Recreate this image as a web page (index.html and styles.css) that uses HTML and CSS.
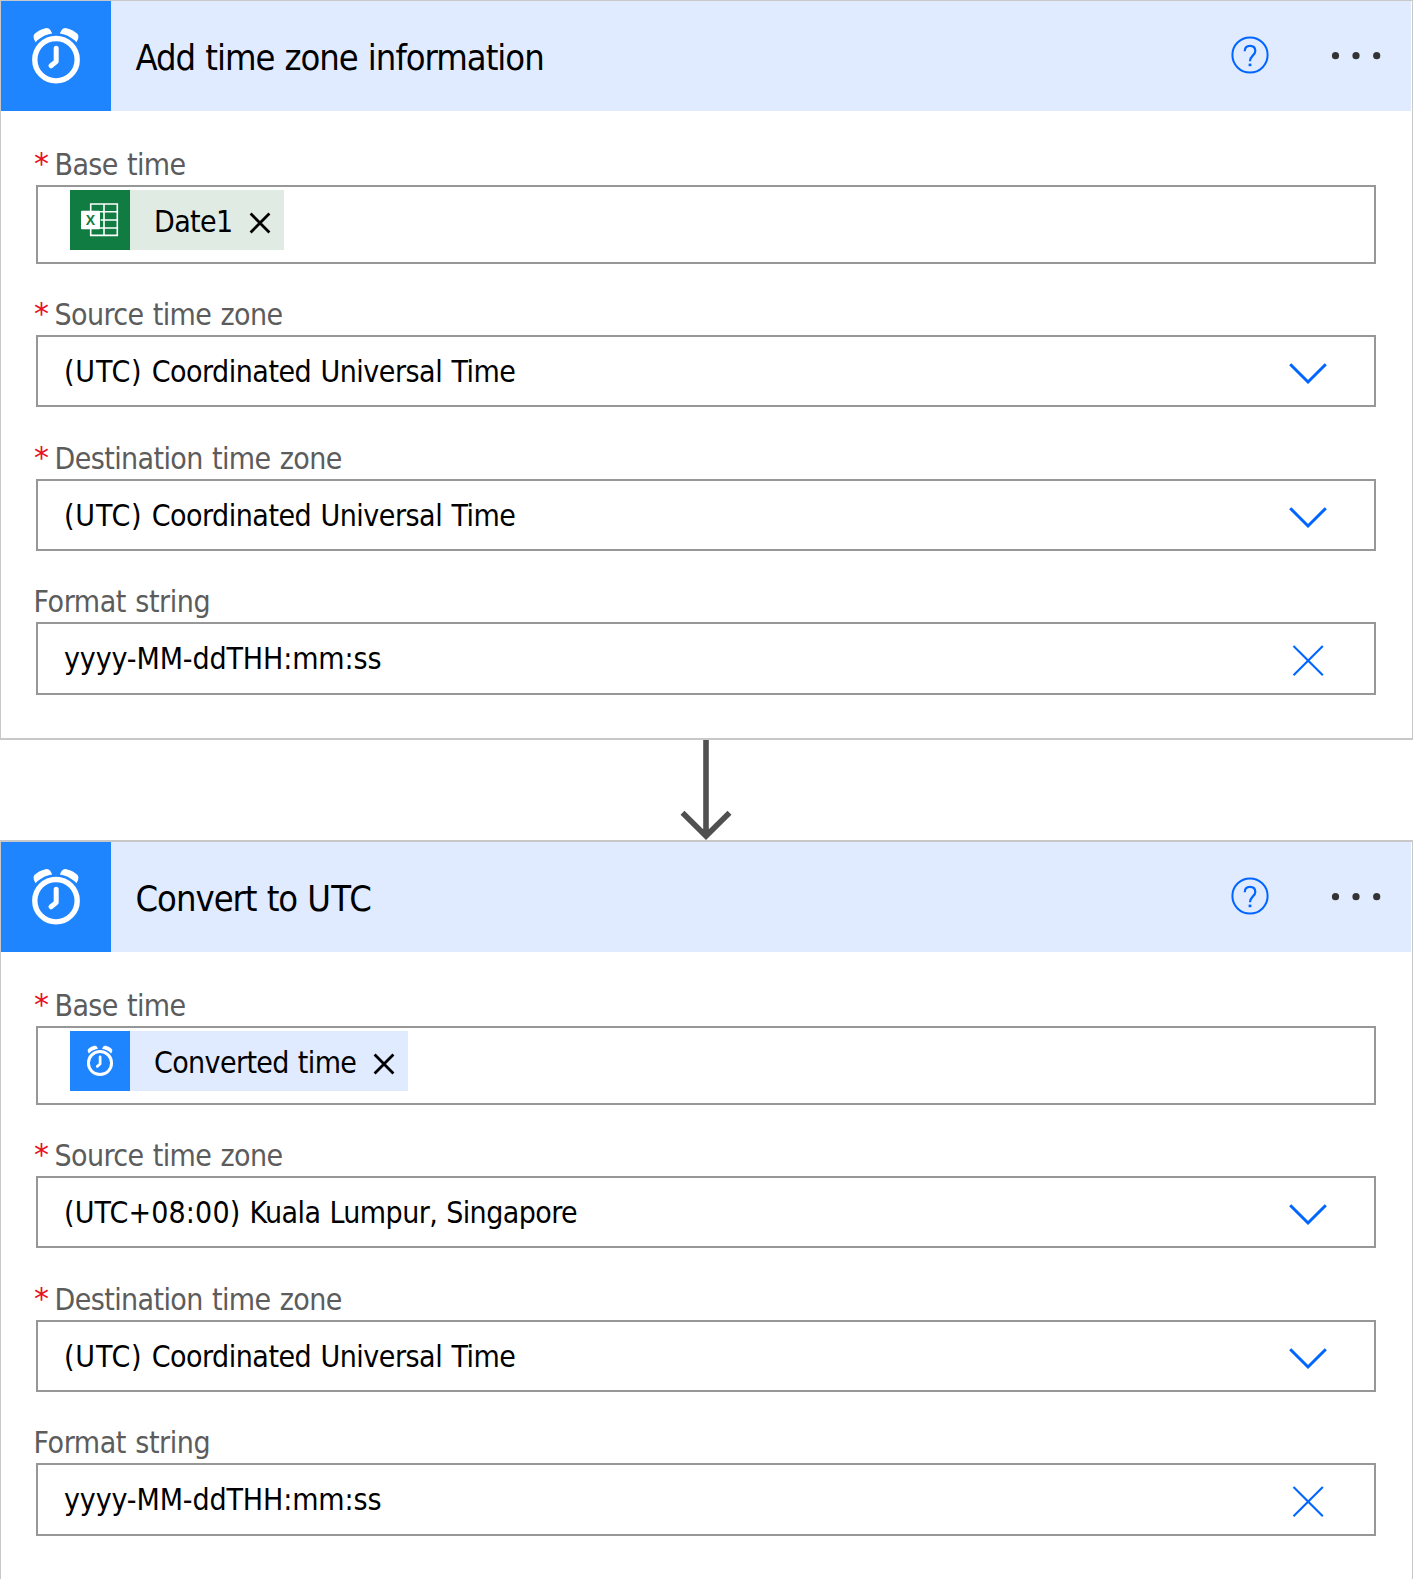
FILE: index.html
```html
<!DOCTYPE html>
<html lang="en">
<head>
<meta charset="utf-8">
<title>Flow designer</title>
<link rel="stylesheet" href="styles.css">
</head>
<body>
<svg class="defs" aria-hidden="true">
  <symbol id="clock" viewBox="0 0 110 110">
    <circle cx="55" cy="58.7" r="21.2" fill="none" stroke="#fff" stroke-width="5.4"/>
    <path d="M55.200 47.2V60.6L50 64.8" fill="none" stroke="#fff" stroke-width="5" stroke-linecap="round" stroke-linejoin="round"/>
    <path id="bell" d="M34.600 41.200C38.500 37.200 44 33.600 51.200 32.600L49.400 29Q47.500 26.600 44.500 27.200Q37.500 29 33.400 33Q31.600 35.400 32.900 38Z" fill="#fff"/>
    <use href="#bell" transform="translate(110 0) scale(-1 1)"/>
  </symbol>
  <symbol id="help" viewBox="0 0 40 40">
    <circle cx="20" cy="20" r="17.600" fill="none" stroke="#0066ff" stroke-width="2"/>
    <path d="M14.700 16.300C14.700 12.500 16.800 10.900 20 10.900C23.200 10.900 25.300 12.800 25.300 15.900C25.300 20.300 20 20.600 20 26.300" fill="none" stroke="#0066ff" stroke-width="2.200"/>
    <rect x="18.600" y="28.600" width="2.800" height="2.600" fill="#0066ff"/>
  </symbol>
  <symbol id="dots" viewBox="0 0 50 10">
    <g fill="#333"><circle cx="4.500" cy="4.700" r="3.600"/><circle cx="25" cy="4.700" r="3.600"/><circle cx="45.700" cy="4.700" r="3.600"/></g>
  </symbol>
  <symbol id="chevron" viewBox="0 0 40 40">
    <path d="M2.200 12.200L20 30L37.800 12.200" fill="none" stroke="#0066ff" stroke-width="3"/>
  </symbol>
  <symbol id="clear" viewBox="0 0 40 40">
    <path d="M5.500 6L34.800 35.300M34.800 6L5.500 35.300" fill="none" stroke="#0066ff" stroke-width="2.100"/>
  </symbol>
  <symbol id="remove" viewBox="0 0 22 22">
    <path d="M1.600 1.600L20.400 20.400M20.400 1.600L1.600 20.400" fill="none" stroke="#000" stroke-width="2.800"/>
  </symbol>
</svg>

<section class="card">
  <header class="head">
    <div class="tile"><svg><use href="#clock"/></svg></div>
    <h1 class="title">Add time zone information</h1>
    <svg class="help"><use href="#help"/></svg>
    <svg class="dots"><use href="#dots"/></svg>
  </header>
  <div class="fields">
    <div class="label"><span class="req">*</span><span class="name">Base time</span></div>
    <div class="box box-token">
      <div class="token token-excel">
        <svg class="token-icon" viewBox="0 0 60 60">
          <rect width="60" height="60" fill="#107c41"/>
          <path d="M20.700 14H47.300V45.400H20.700ZM34 14V45.400M20.700 21.800H47.300M20.700 30H47.300M20.700 38H47.300" fill="none" stroke="#fff" stroke-width="1.600"/>
          <rect x="28" y="22.600" width="2.600" height="14.600" fill="#107c41"/>
          <rect x="11" y="20.700" width="19" height="18.500" rx="1" fill="#fff"/>
          <text class="excel-x" x="20.500" y="35.300" text-anchor="middle">X</text>
        </svg>
        <span class="token-text">Date1</span>
        <svg class="remove"><use href="#remove"/></svg>
      </div>
    </div>
    <div class="label gap-s"><span class="req">*</span><span class="name">Source time zone</span></div>
    <div class="box"><span class="value"><span class="utc">(UTC)</span> Coordinated Universal Time</span><svg class="action"><use href="#chevron"/></svg></div>
    <div class="label gap-m"><span class="req">*</span><span class="name">Destination time zone</span></div>
    <div class="box"><span class="value"><span class="utc">(UTC)</span> Coordinated Universal Time</span><svg class="action"><use href="#chevron"/></svg></div>
    <div class="label gap-s"><span class="name plain">Format string</span></div>
    <div class="box box-tall"><span class="format">yyyy-MM-ddTHH:mm:ss</span><svg class="action"><use href="#clear"/></svg></div>
  </div>
</section>

<svg class="arrow" viewBox="0 0 60 100">
  <path d="M30 0V95M6.500 72.700L30 96L53.500 72.700" fill="none" stroke="#505050" stroke-width="5.600"/>
</svg>

<section class="card card-next">
  <header class="head">
    <div class="tile"><svg><use href="#clock"/></svg></div>
    <h1 class="title">Convert to <span class="title-utc">UTC</span></h1>
    <svg class="help"><use href="#help"/></svg>
    <svg class="dots"><use href="#dots"/></svg>
  </header>
  <div class="fields">
    <div class="label"><span class="req">*</span><span class="name">Base time</span></div>
    <div class="box box-token">
      <div class="token token-time">
        <div class="token-icon time-icon"><svg><use href="#clock"/></svg></div>
        <span class="token-text">Converted time</span>
        <svg class="remove"><use href="#remove"/></svg>
      </div>
    </div>
    <div class="label gap-s"><span class="req">*</span><span class="name">Source time zone</span></div>
    <div class="box"><span class="value place"><span class="offset">(UTC+08:00)</span> Kuala Lumpur, Singapore</span><svg class="action"><use href="#chevron"/></svg></div>
    <div class="label gap-m"><span class="req">*</span><span class="name">Destination time zone</span></div>
    <div class="box"><span class="value"><span class="utc">(UTC)</span> Coordinated Universal Time</span><svg class="action"><use href="#chevron"/></svg></div>
    <div class="label gap-s"><span class="name plain">Format string</span></div>
    <div class="box box-tall"><span class="format">yyyy-MM-ddTHH:mm:ss</span><svg class="action"><use href="#clear"/></svg></div>
  </div>
</section>
</body>
</html>
```
FILE: styles.css
```css
* { box-sizing: border-box; }
html, body { margin: 0; height: 1579px; overflow: hidden; background: #fff; }
body {
  font-family: Tahoma, "DejaVu Sans Condensed", "DejaVu Sans", sans-serif;
  font-stretch: condensed;
  font-size: 30px;
  color: #000;
  display: flex;
  flex-direction: column;
}
svg { display: block; flex: none; }
.defs { width: 0; height: 0; position: absolute; }
.card { flex: none; border: 1px solid #c8c8c8; border-bottom-width: 2px; background: #fff; }
.card-next { border-top-width: 2px; }
.head { display: flex; align-items: center; height: 110px; margin-right: 1px; background: #e1ebff; padding-right: 30px; }
.tile { width: 110px; height: 110px; background: #1f85ff; flex: none; }
.tile svg { width: 110px; height: 110px; }
.title { flex: 1; margin: 0; padding: 4px 0 0 24.500px; font-size: 36px; font-weight: 400; line-height: 44px; white-space: nowrap; letter-spacing: -1px; word-spacing: 0.8px; }
.title-utc { letter-spacing: 0.3px; }
.help { width: 40px; height: 40px; margin: 0 61px 2px 0; }
.dots { width: 50px; height: 10px; }
.fields { padding: 34px 36px 43px 35px; }
.label { display: flex; height: 40px; line-height: 40px; color: #5c5c5c; white-space: nowrap; margin-left: -2px; }
.name { letter-spacing: -0.6px; word-spacing: 1.2px; }
.plain { letter-spacing: -0.42px; margin-left: -0.500px; }
.req { color: #e81123; width: 20.500px; font-family: "DejaVu Sans", sans-serif; font-stretch: normal; line-height: 37px; }
.gap-s { margin-top: 31px; }
.gap-m { margin-top: 32px; }
.box { display: flex; align-items: center; justify-content: space-between; height: 72px; border: 2px solid #979797; padding: 0 46px 0 26px; white-space: nowrap; }
.value { letter-spacing: -0.5px; word-spacing: 1.2px; }
.place { letter-spacing: -0.58px; word-spacing: 1px; }
.utc { letter-spacing: 0.8px; }
.offset { letter-spacing: 0.15px; }
.format { letter-spacing: -0.12px; }
.box-tall { height: 73px; }
.box-token { height: 79px; align-items: flex-start; justify-content: flex-start; padding: 3px 0 0 32px; }
.action { width: 40px; height: 40px; margin-top: 2px; }
.token { display: flex; height: 60px; align-items: center; padding-right: 13px; }
.token-excel { background: #e0ebe3; width: 214px; }
.token-time { background: #e1ebff; width: 338px; }
.token-icon { width: 60px; height: 60px; flex: none; }
.time-icon { background: #1f85ff; }
.time-icon svg { width: 60px; height: 60px; }
.token-text { padding: 3px 0 0 24px; flex: 1; line-height: 60px; letter-spacing: -0.62px; word-spacing: 1px; }
.remove { width: 22px; height: 22px; margin-top: 6px; }
.excel-x { font: bold 14px "Liberation Sans", sans-serif; fill: #107c41; }
.arrow { width: 60px; height: 100px; margin-left: 676px; }
```
